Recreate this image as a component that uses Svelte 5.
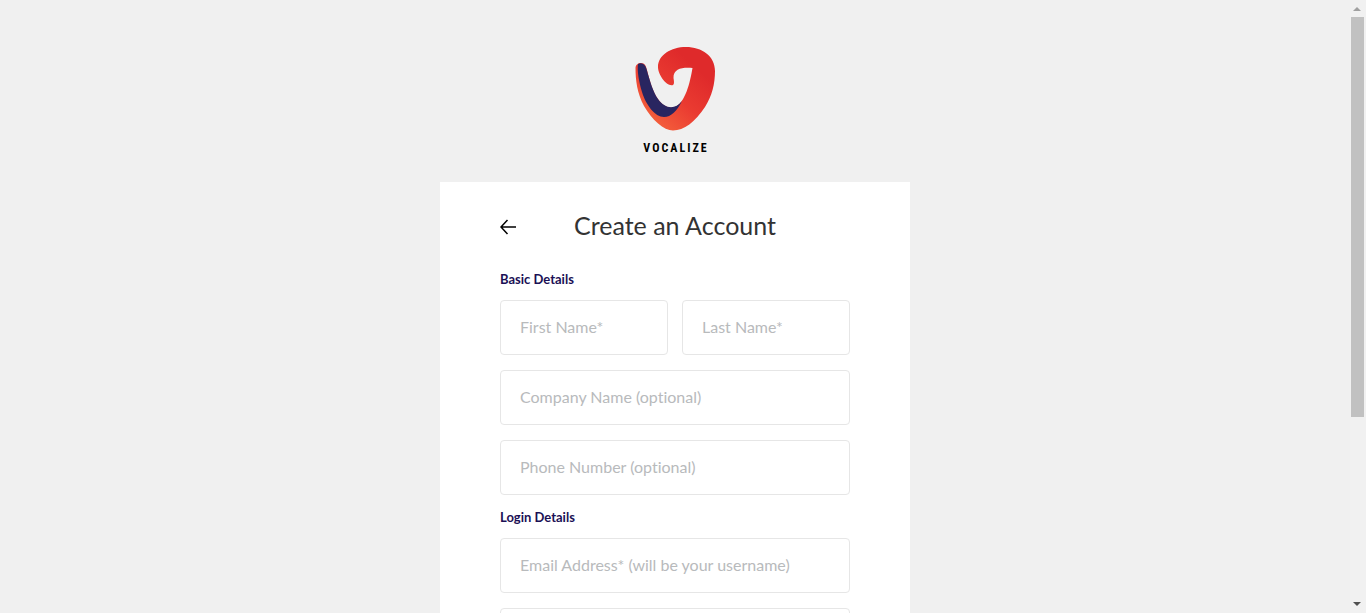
<script>
  const basic = [
    { id: 'first', label: 'First Name*', type: 'text', half: true },
    { id: 'last', label: 'Last Name*', type: 'text', half: true },
    { id: 'company', label: 'Company Name (optional)', type: 'text' },
    { id: 'phone', label: 'Phone Number (optional)', type: 'tel' }
  ];
  const login = [
    { id: 'email', label: 'Email Address* (will be your username)', type: 'email' },
    { id: 'password', label: '', type: 'password' }
  ];
</script>

{#snippet fields(list)}
  <div class="fields">
    {#each list as f (f.id)}
      <input class:half={f.half} id={f.id} type={f.type} placeholder={f.label} aria-label={f.label || null} />
    {/each}
  </div>
{/snippet}

<div class="shell">
  <main>
    <header class="brand">
      <svg width="80" height="85" viewBox="0 0 80 85" aria-hidden="true">
        <defs>
          <linearGradient id="flame" x1="15" y1="75" x2="62" y2="22" gradientUnits="userSpaceOnUse">
            <stop offset="0" stop-color="#f4603c" />
            <stop offset="0.5" stop-color="#ea3b31" />
            <stop offset="1" stop-color="#df2a2b" />
          </linearGradient>
        </defs>
        <path fill="url(#flame)" d="M0.500 22C0.500 19 3 17 6 17C10 17 11 20 12 24C15 36 18 46 23 53C28 60 34 63 40 61C50 57 55 37 57.500 22C49 21 38 22 38.500 32C39 35 39.500 38 38 39C32 41 23 29 23 21C23 9 36 1 51 1C67 1 80 10 80 25C80 38 77 50 70 61C60 76 49 84.500 38 84.500C29 84.500 17 74 9 60C2 47 0.500 34 0.500 22Z" />
        <path fill="#292560" d="M3 18C7 16 10 18 11.500 23C15 35 18 46 23 53C30 63 40 64 47 55C42 65 36 71 29 71C20 71 11 59 7 46C4 36 2 25 3 18Z" />
      </svg>
      <span class="wordmark">VOCALIZE</span>
    </header>
    <form class="card">
      <div class="heading">
        <button type="button" class="back" aria-label="Back">
          <svg width="16" height="16" viewBox="0 0 16 16" fill="none" stroke="#000" stroke-width="1.5" aria-hidden="true">
            <path d="M16 8H1M7.500 1L1 8L7.500 15" />
          </svg>
        </button>
        <h1>Create an Account</h1>
      </div>
      <h2>Basic Details</h2>
      {@render fields(basic)}
      <h2>Login Details</h2>
      {@render fields(login)}
    </form>
  </main>
  <div class="scrollbar" aria-hidden="true">
    <svg width="15" height="17" viewBox="0 0 15 17"><path fill="#a0a0a0" d="M3 11L7 7L11 11Z" /></svg>
    <div class="track"><div class="thumb"></div></div>
    <svg width="15" height="17" viewBox="0 0 15 17"><path fill="#505050" d="M3 6L7 10L11 6Z" /></svg>
  </div>
</div>

<style>
  :global(body) {
    margin: 0;
    background: #f0f0f0;
    font-family: Lato, "Liberation Sans", sans-serif;
    font-variant-ligatures: none;
  }
  .shell {
    display: grid;
    grid-template-columns: minmax(0, 1fr) 16px;
    height: 100vh;
  }
  main {
    overflow-y: auto;
    scrollbar-width: none;
  }
  .brand {
    display: flex;
    flex-direction: column;
    align-items: center;
    gap: 11px;
    padding: 46px 0 27px;
  }
  .wordmark {
    padding-left: 2px;
    font: bold 12px/13px "Liberation Sans Narrow", "Roboto Condensed", Roboto, sans-serif;
    letter-spacing: 2px;
    color: #000;
  }
  .card {
    box-sizing: border-box;
    width: 100%;
    max-width: 470px;
    margin: 0 auto;
    padding: 28px 60px 60px;
    background: #fff;
  }
  .heading {
    display: grid;
    grid-template-columns: 16px 1fr 16px;
    align-items: center;
    margin-bottom: 30px;
  }
  .back {
    display: flex;
    padding: 4px 0 0;
    border: 0;
    background: none;
    cursor: pointer;
  }
  h1 {
    margin: 0;
    font-size: 25px;
    line-height: 30px;
    font-weight: 400;
    text-align: center;
    color: #333;
  }
  h2 {
    margin: 0 0 12px;
    font-size: 13px;
    line-height: 18px;
    font-weight: 700;
    color: #1b1055;
  }
  .fields {
    display: grid;
    grid-template-columns: 1fr 1fr;
    gap: 15px 14px;
    margin-bottom: 13px;
  }
  input {
    grid-column: span 2;
    box-sizing: border-box;
    width: 100%;
    height: 55px;
    padding: 0 19px 2px;
    border: 1px solid #e6e6e6;
    border-radius: 4px;
    background: #fff;
    font: 16px Lato, sans-serif;
    font-variant-ligatures: none;
    color: #333;
  }
  input.half {
    grid-column: span 1;
  }
  input::placeholder {
    color: #b8babc;
    opacity: 1;
  }
  .scrollbar {
    display: grid;
    grid-template-rows: 17px 1fr 17px;
    background: #f1f1f1;
  }
  .track {
    display: flex;
  }
  .thumb {
    width: 13px;
    height: 69%;
    margin-left: 1px;
    background: #c1c1c1;
  }
</style>
